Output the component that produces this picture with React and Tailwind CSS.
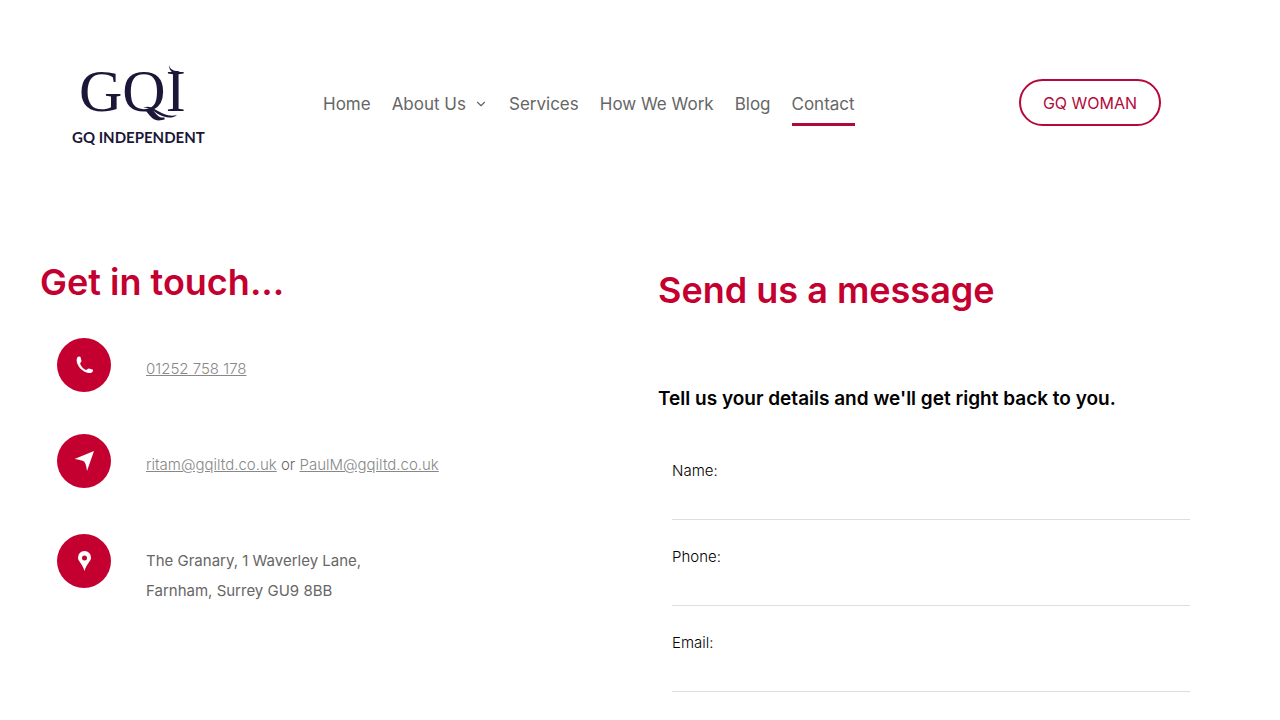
import { ChevronDown } from 'lucide-react';

const links = ['Home', 'About Us', 'Services', 'How We Work', 'Blog', 'Contact'];
const fields = [
  { id: 'name', label: 'Name:', type: 'text' },
  { id: 'phone', label: 'Phone:', type: 'tel' },
  { id: 'email', label: 'Email:', type: 'email' },
];

function Logo() {
  return (
    <a href="#home" aria-label="GQ Independent" className="block w-[144px] shrink-0 text-[#1b1738]">
      <svg viewBox="0 -12 144 100" className="block w-full overflow-visible" fill="currentColor">
        <text x="11" y="50" fontSize="60" fontFamily="'Liberation Serif', serif">GQI</text>
        <path d="M101 4 C102 8 105 10 110 10 L114 12 L105 12 C102 10 101 7 101 4 Z" />
        <path d="M75 47 C82 43 88 50 96 53 C101 55 105 55 109 54 C104 58 97 57 90 53 C84 49 80 46 75 47 Z" />
        <text x="4" y="82" fontSize="15" fontWeight="700" fontFamily="Lato, sans-serif">GQ INDEPENDENT</text>
      </svg>
    </a>
  );
}

function PhoneIcon() {
  return (
    <svg viewBox="0 0 54 54" className="w-full" fill="white">
      <path d="M20 20 C20.500 18.500 22.500 18 23.500 19 L24.500 23 C24.500 24 23 24.500 23.200 26 C24.500 29 26.500 31 29 32 C30 32 30.500 30.500 32 30.500 L35.500 31.500 C37 33 35 35 33 35 C26 35 18 27 20 20 Z" />
    </svg>
  );
}

function ArrowIcon() {
  return (
    <svg viewBox="0 0 54 54" className="w-full" fill="white">
      <path d="M37 17 L30 37 Q29 29 27 27.500 Q25 26 17.500 25 Z" />
    </svg>
  );
}

function PinIcon() {
  return (
    <svg viewBox="0 0 54 54" className="w-full" fill="white" fillRule="evenodd">
      <path d="M27.500 17 A6.500 6.500 0 0 1 34 24 C34 27 30 29 27.500 37 C25 29 21 27 21 24 A6.500 6.500 0 0 1 27.500 17 Z M27.500 21.500 A2.500 2.500 0 1 0 27.500 26.500 A2.500 2.500 0 1 0 27.500 21.500 Z" />
    </svg>
  );
}

function ContactRow({ icon, multiline = false, children }) {
  return (
    <li className={'flex items-start gap-[35px] ' + (multiline ? 'pt-1' : '')}>
      <span className="block w-[54px] shrink-0 rounded-full bg-[#c3002f]">{icon}</span>
      <div className={'text-[15px] leading-[30px] ' + (multiline ? 'pt-3' : 'pt-4')}>{children}</div>
    </li>
  );
}

export default function App() {
  return (
    <div className="min-h-screen bg-white font-[Inter,sans-serif] text-[#666]">
      <header className="flex items-start px-[68px] pt-[49px]">
        <Logo />
        <nav className="ml-[111px] pt-9">
          <ul className="flex gap-[21px] text-[17px] leading-[38px]">
            {links.map((link) => (
              <li key={link}>
                <a
                  href={'#' + link.toLowerCase().replaceAll(' ', '-')}
                  className={'flex items-center gap-2 whitespace-nowrap border-b-[3px] ' + (link === 'Contact' ? 'border-[#b00a38]' : 'border-transparent')}
                >
                  {link}
                  {link === 'About Us' && <ChevronDown size={14} strokeWidth={2} />}
                </a>
              </li>
            ))}
          </ul>
        </nav>
        <a href="#gq-woman" className="mr-[51px] ml-auto mt-[30px] flex h-[47px] w-[142px] items-center justify-center rounded-full border-2 border-[#b5083b] text-base text-[#b5083b]">
          GQ WOMAN
        </a>
      </header>

      <main className="grid grid-cols-2 pl-10 pr-1 pt-[106px]">
        <section>
          <h1 className="text-[36px] font-semibold leading-[54px] text-[#c3002f]">Get in touch...</h1>
          <ul className="mt-[29px] flex flex-col gap-[42px] pl-[17px]">
            <ContactRow icon={<PhoneIcon />}>
              <a href="tel:01252758178" className="font-light text-[#888] underline">01252 758 178</a>
            </ContactRow>
            <ContactRow icon={<ArrowIcon />}>
              <p className="font-light">
                <a href="mailto:ritam@gqiltd.co.uk" className="text-[#888] underline">ritam@gqiltd.co.uk</a>
                {' or '}
                <a href="mailto:PaulM@gqiltd.co.uk" className="text-[#888] underline">PaulM@gqiltd.co.uk</a>
              </p>
            </ContactRow>
            <ContactRow icon={<PinIcon />} multiline>
              <address className="not-italic">
                The Granary, 1 Waverley Lane,<br />Farnham, Surrey GU9 8BB
              </address>
            </ContactRow>
          </ul>
        </section>

        <section className="pt-2 pr-[86px] text-black">
          <h2 className="text-[36px] font-semibold leading-[54px] text-[#c3002f]">Send us a message</h2>
          <p className="mt-[67px] text-[19px] font-semibold leading-[30px]">Tell us your details and we'll get right back to you.</p>
          <form className="mt-[42px] flex flex-col gap-[22px] pl-[14px]">
            {fields.map((field) => (
              <div key={field.id}>
                <label htmlFor={field.id} className="block text-[15px] font-light leading-[30px]">{field.label}</label>
                <input id={field.id} type={field.type} className="block h-[34px] w-full border-b border-[#ddd] bg-transparent outline-none" />
              </div>
            ))}
          </form>
        </section>
      </main>
    </div>
  );
}
